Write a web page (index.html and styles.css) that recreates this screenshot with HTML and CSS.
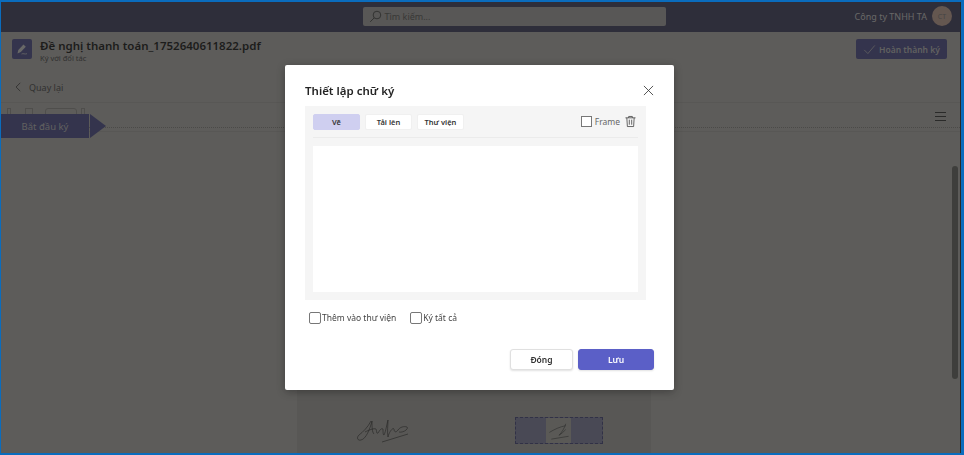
FILE: index.html
```html
<!DOCTYPE html>
<html lang="vi">
<head>
<meta charset="utf-8">
<title>Thiết lập chữ ký</title>
<link rel="stylesheet" href="styles.css">
</head>
<body>
<div class="app">
  <header class="topbar">
    <div class="search">
      <svg class="search-icon" viewBox="0 0 16 16" width="13" height="13"><circle cx="9.800" cy="6.200" r="4.700"/><path d="M6.400 9.700 1.500 14.600"/></svg>
      <span>Tìm kiếm...</span>
    </div>
    <div class="account">
      <span>Công ty TNHH TA</span>
      <span class="avatar">CT</span>
    </div>
  </header>
  <section class="doc-head">
    <div class="doc-icon">
      <svg viewBox="0 0 20 20" width="20" height="20"><path class="pen" d="M5.500 14.500 6.300 11 11.500 5.500 13.800 7.800 8.800 13Z"/><path class="pen-line" d="M9.500 15c2-1 3 .6 5.500-.3"/></svg>
    </div>
    <div class="doc-title">
      <h1>Đề nghị thanh toán_1752640611822.pdf</h1>
      <p>Ký với đối tác</p>
    </div>
    <button class="finish">
      <svg viewBox="0 0 16 16" width="13" height="13"><path d="M1.500 8.500 6 13 14.500 3"/></svg>
      Hoàn thành ký
    </button>
  </section>
  <nav class="back">
    <svg viewBox="0 0 10 14" width="7" height="10"><path d="M7.500 1 1.500 7l6 6"/></svg>
    <span>Quay lại</span>
  </nav>
  <div class="toolbar">
    <div class="tools"><i class="tool t1"></i><i class="tool t2"></i><i class="tool t3"></i><i class="tool t4"></i></div>
    <div class="start"><span class="start-label">Bắt đầu ký</span><span class="start-arrow"></span></div>
    <div class="menu"><i></i><i></i><i></i></div>
  </div>
  <main class="viewer">
    <div class="paper">
      <div class="signs">
        <svg class="scribble" viewBox="0 0 54 30" width="54" height="30"><path d="M15 6C12 12 7 17 3 20 0 23 2 26 5 25 10 24 14 14 16 6 16 12 16 17 18 19M9 17C13 15 18 13 20 14 21 16 20 19 22 18 24 15 25 13 27 14 27 17 27 20 28 20 30 16 31 8 32 5 32 10 31 17 32 22 33 17 37 12 38 14 38 17 40 18 42 15 44 12 48 11 51 12 53 14 47 18 43 17M26 27 52 19"/></svg>
        <div class="field">
          <svg viewBox="0 0 25 26" width="25" height="25"><path d="M3 15C8 12 14 9 20 8M20 6C19 10 16 15 13 18 15 17 18 14 20 12M5 22 23 19"/></svg>
        </div>
      </div>
    </div>
    <div class="scrollbar"></div>
  </main>
</div>

<div class="overlay"></div>

<div class="dialog">
  <div class="dialog-head">
    <h2>Thiết lập chữ ký</h2>
    <svg class="close" viewBox="0 0 12 12" width="11" height="11"><path d="M1 1 11 11M11 1 1 11"/></svg>
  </div>
  <div class="panel">
    <div class="panel-bar">
      <button class="tab active">Vẽ</button>
      <button class="tab">Tải lên</button>
      <button class="tab">Thư viện</button>
      <label class="frame"><span class="box small"></span>Frame</label>
      <svg class="trash" viewBox="0 0 12 13" width="11" height="13"><path d="M.5 2.500h11M4 2.500V1h4v1.500M2 2.500l.6 9.500h6.800l.6-9.500M4.700 4.500v5.500M7.300 4.500v5.500"/></svg>
    </div>
    <div class="canvas"></div>
  </div>
  <div class="options">
    <label class="option"><span class="box"></span>Thêm vào thư viện</label>
    <label class="option"><span class="box"></span>Ký tất cả</label>
  </div>
  <div class="actions">
    <button class="btn">Đóng</button>
    <button class="btn primary">Lưu</button>
  </div>
</div>
</body>
</html>
```

FILE: styles.css
```css
* { box-sizing: border-box; }
html, body { margin: 0; height: 100%; overflow: hidden; }
body {
  font-family: "Noto Sans", "Open Sans", sans-serif;
  border-style: solid;
  border-color: #0a6cbd;
  border-width: 2px 3px 2px 1px;
  background: #b1afac;
  color: #000;
}
button { font-family: inherit; }

.app {
  height: 451px;
  display: flex;
  flex-direction: column;
  border-right: 1px solid #333;
}

.topbar {
  flex: none;
  height: 30px;
  background: #3e3c5c;
  display: flex;
  align-items: center;
  justify-content: center;
  position: relative;
}
.search {
  width: 303px;
  height: 19px;
  margin-left: 67px;
  margin-top: -1px;
  background: #a5a4a2;
  border-radius: 2px;
  display: flex;
  align-items: center;
  gap: 3px;
  padding-left: 6px;
  font-size: 9px;
  color: #555;
}
.search-icon { fill: none; stroke: #444; stroke-width: 1.200; }
.account {
  position: absolute;
  right: 8px;
  top: 4px;
  display: flex;
  align-items: center;
  gap: 5px;
  font-size: 9px;
  color: #ccc;
}
.avatar {
  width: 20px;
  height: 20px;
  border-radius: 50%;
  background: #c4a294;
  color: #777;
  font-size: 7px;
  display: flex;
  align-items: center;
  justify-content: center;
}

.doc-head {
  flex: none;
  height: 40px;
  display: flex;
  align-items: flex-start;
  padding: 7px 13px 0 11px;
}
.doc-icon {
  width: 20px;
  height: 20px;
  border-radius: 2px;
  background: #4c4b8c;
  display: flex;
  align-items: center;
  justify-content: center;
}
.pen { fill: #ccc; }
.pen-line { fill: none; stroke: #ccc; stroke-width: .8; }
.doc-title { margin-left: 8px; flex: 1; }
.doc-title h1 { margin: 0; font-size: 11.500px; line-height: 14px; font-weight: 600; color: #111; }
.doc-title p { margin: 0; font-size: 7.500px; line-height: 10px; color: #444; }
.finish {
  height: 20px;
  width: 91px;
  border: 0;
  border-radius: 2px;
  background: #4c4b8c;
  color: #bbb;
  font-size: 8.500px;
  font-weight: 600;
  display: flex;
  align-items: center;
  justify-content: center;
  gap: 3px;
  padding: 0;
}
.finish svg { fill: none; stroke: #bbb; stroke-width: 1; }

.back {
  flex: none;
  height: 30px;
  display: flex;
  align-items: center;
  gap: 7px;
  padding-left: 14px;
  font-size: 9px;
  color: #444;
}
.back svg { fill: none; stroke: #333; stroke-width: 1.100; }

.toolbar {
  flex: none;
  height: 30px;
  border-top: 1px solid #a5a3a0;
  border-bottom: 1px solid #a5a3a0;
  position: relative;
  display: flex;
  justify-content: space-between;
  align-items: center;
  padding-right: 14px;
}
.toolbar::after {
  content: "";
  position: absolute;
  left: 0;
  right: 0;
  top: 24px;
  border-top: 1px dotted #85837f;
}
.tools { display: flex; align-items: flex-start; height: 28px; padding: 5px 0 0 6px; }
.tool { display: block; height: 10px; border: 1px solid #8f8d8a; }
.t1 { width: 4px; }
.t2 { width: 8px; margin-left: 14px; }
.t3 { width: 32px; height: 18px; margin-left: 12px; border-radius: 3px; }
.t4 { width: 4px; margin-left: 4px; }
.start {
  position: absolute;
  left: 0;
  top: 11px;
  display: flex;
  z-index: 1;
}
.start-label {
  width: 88px;
  height: 24px;
  background: #4c4b8c;
  color: #bbb;
  font-size: 9.500px;
  display: flex;
  align-items: center;
  justify-content: center;
}
.start-arrow {
  width: 0;
  height: 0;
  margin-left: 1px;
  border-left: 16px solid #4c4b8c;
  border-top: 12px solid transparent;
  border-bottom: 12px solid transparent;
}
.menu { display: flex; flex-direction: column; gap: 3px; width: 11px; margin-top: -1px; }
.menu i { display: block; height: 1px; background: #333; }

.viewer {
  flex: 1;
  min-height: 0;
  position: relative;
  display: flex;
  justify-content: center;
}
.paper {
  width: 354px;
  margin-right: 14px;
  background: #a6a4a1;
  display: flex;
  flex-direction: column;
  justify-content: flex-end;
}
.signs { display: flex; align-items: center; padding: 0 48px 8px 59px; justify-content: space-between; }
.scribble { fill: none; stroke: #222; stroke-width: .6; }
.field {
  width: 88px;
  height: 27px;
  border: 1px dashed #44447c;
  background: #7f7fa0;
  display: flex;
  justify-content: center;
}
.field svg { background: #aaa9a4; fill: none; stroke: #333; stroke-width: .6; }
.scrollbar {
  position: absolute;
  right: 2px;
  top: 34px;
  width: 6px;
  height: 213px;
  border-radius: 3px;
  background: #646461;
}

.overlay {
  position: fixed;
  inset: 2px 3px 2px 1px;
  background: rgba(37, 36, 35, .6);
  z-index: 10;
}

.dialog {
  position: fixed;
  left: 285px;
  top: 65px;
  width: 389px;
  height: 325px;
  z-index: 11;
  background: #fff;
  border-radius: 2px;
  box-shadow: 0 2px 8px rgba(0, 0, 0, .3);
  padding: 0 20px;
  display: flex;
  flex-direction: column;
}
.dialog-head {
  height: 41px;
  display: flex;
  align-items: flex-start;
  justify-content: space-between;
  padding-top: 16px;
}
.dialog-head h2 { margin: 0; font-size: 11.500px; line-height: 20px; font-weight: 600; color: #242424; }
.close { fill: none; stroke: #333; stroke-width: .9; margin-top: 4px; }
.panel { width: 341px; background: #f5f5f5; }
.panel-bar {
  height: 32px;
  margin: 0 8px;
  border-bottom: 1px solid #ebebeb;
  display: flex;
  align-items: center;
  gap: 5px;
}
.tab {
  height: 16px;
  padding: 0;
  width: 47px;
  border: 1px solid #f0f0f0;
  border-radius: 2px;
  background: #fff;
  font-size: 7.500px;
  font-weight: 600;
  color: #333;
}
.tab.active { background: #cfcff0; border-color: #cfcff0; }
.frame {
  margin-left: auto;
  display: flex;
  align-items: center;
  gap: 3px;
  font-size: 8.500px;
  color: #666;
}
.trash { fill: none; stroke: #333; stroke-width: .8; margin-right: 2px; }
.canvas { height: 146px; margin: 8px; background: #fff; }
.box {
  width: 12px;
  height: 12px;
  border: 1px solid #777;
  border-radius: 2px;
  background: #fff;
  display: block;
}
.box.small { width: 11px; height: 11px; border-radius: 0; }
.options {
  display: flex;
  gap: 14px;
  margin: 11px 0 0 4px;
  height: 13px;
  align-items: center;
}
.option { display: flex; align-items: center; gap: 1px; font-size: 8.500px; color: #444; }
.actions {
  margin-top: 25px;
  display: flex;
  justify-content: flex-end;
  gap: 5px;
}
.btn {
  height: 21px;
  width: 63px;
  border: 1px solid #e0e0e0;
  border-radius: 3px;
  background: #fff;
  font-size: 8.500px;
  font-weight: 600;
  color: #333;
  padding: 0;
  box-shadow: 0 1px 2px rgba(0, 0, 0, .12);
}
.btn.primary { width: 76px; background: #5b5fc7; border-color: #5b5fc7; color: #fff; }
```
